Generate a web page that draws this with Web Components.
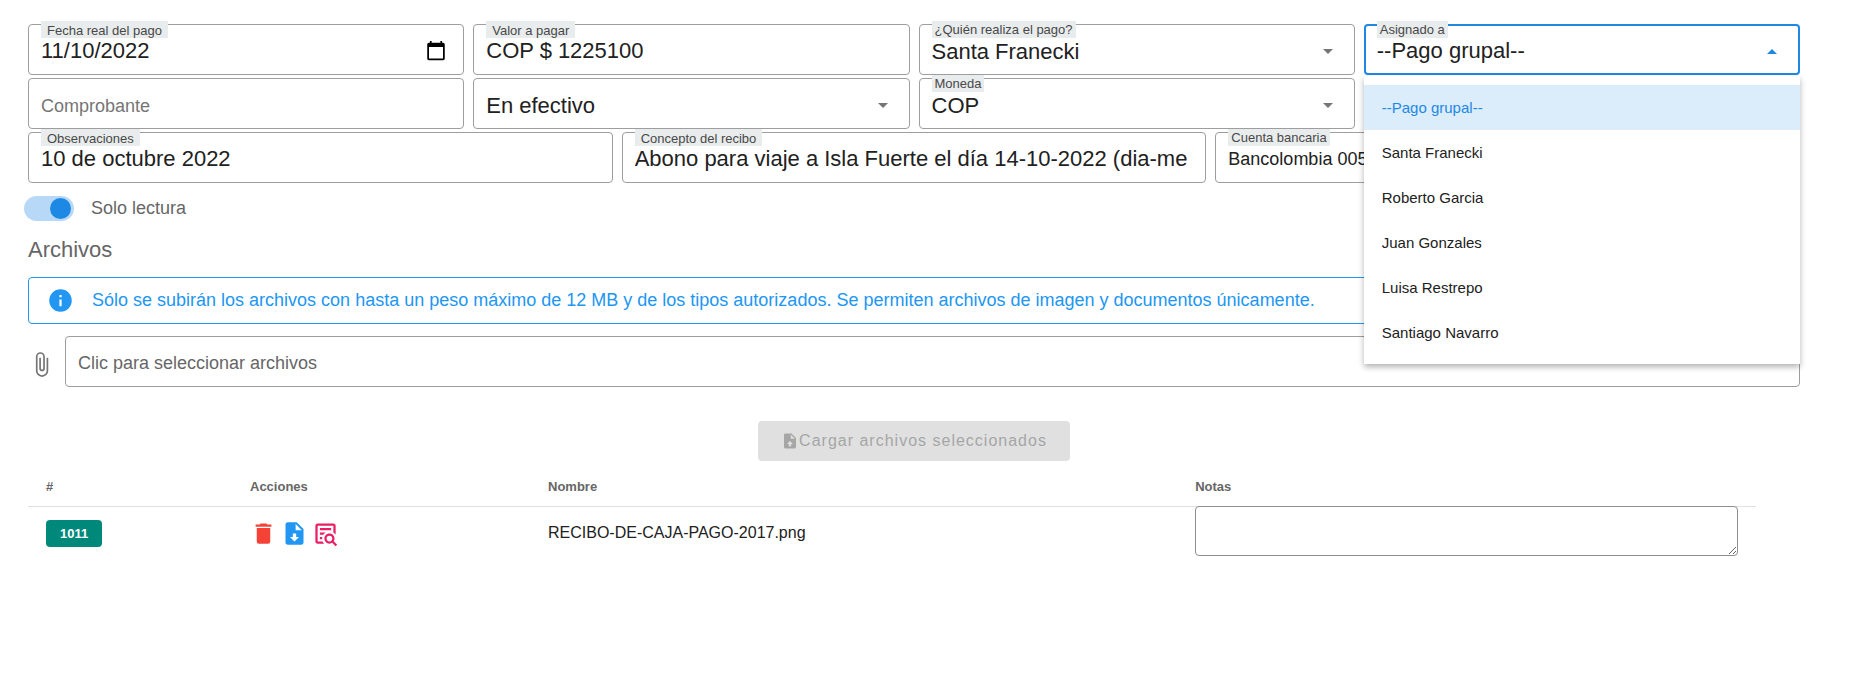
<!DOCTYPE html>
<html lang="es">
<head>
<meta charset="utf-8">
<title>Recibo de pago</title>
<style>
    body {
        margin: 0;
        background: #fff;
        color: #212121;
        font-family: "Liberation Sans", Arial, sans-serif;
        font-size: 18px;
    }
</style>
</head>
<body>
<payment-page></payment-page>

<script>
const ICONS = {
    'delete': 'M19,4H15.5L14.5,3H9.5L8.5,4H5V6H19M6,19A2,2 0 0,0 8,21H16A2,2 0 0,0 18,19V7H6V19Z',
    'file-download': 'M14,2H6C4.89,2 4,2.89 4,4V20C4,21.11 4.89,22 6,22H18C19.11,22 20,21.11 20,20V8L14,2M12,19L8,15H10.5V12H13.5V15H16L12,19M13,9V3.5L18.5,9H13Z',
    'file-upload': 'M14,2H6C4.89,2 4,2.89 4,4V20C4,21.11 4.89,22 6,22H18C19.11,22 20,21.11 20,20V8L14,2M13.5,16V19H10.5V16H8L12,12L16,16H13.5M13,9V3.5L18.5,9H13Z',
    'text-search': 'M15.5,12C18,12 20,14 20,16.5C20,17.38 19.75,18.21 19.31,18.9L22.39,22L21,23.39L17.88,20.32C17.19,20.75 16.37,21 15.5,21C13,21 11,19 11,16.5C11,14 13,12 15.5,12M15.5,14A2.5,2.5 0 0,0 13,16.5A2.5,2.5 0 0,0 15.5,19A2.5,2.5 0 0,0 18,16.5A2.5,2.5 0 0,0 15.5,14M5,3H19C20.11,3 21,3.89 21,5V13.03C20.5,12.23 19.81,11.54 19,11V5H5V19H9.5C9.81,19.75 10.26,20.42 10.81,21H5C3.89,21 3,20.11 3,19V5C3,3.89 3.89,3 5,3M7,7H17V9H7V7M7,11H12.03C11.23,11.5 10.54,12.19 10,13H7V11M7,15H9.17C9.06,15.5 9,16 9,16.5V17H7V15Z',
    'paperclip': 'M16.5,6V17.5A4,4 0 0,1 12.5,21.5A4,4 0 0,1 8.5,17.5V5A2.5,2.5 0 0,1 11,2.5A2.5,2.5 0 0,1 13.5,5V15.5A1,1 0 0,1 12.5,16.5A1,1 0 0,1 11.5,15.5V6H10V15.5A2.5,2.5 0 0,0 12.5,18A2.5,2.5 0 0,0 15,15.5V5A4,4 0 0,0 11,1A4,4 0 0,0 7,5V17.5A5.5,5.5 0 0,0 12.5,23A5.5,5.5 0 0,0 18,17.5V6H16.5Z',
    'information': 'M13,9H11V7H13M13,17H11V11H13M12,2A10,10 0 0,0 2,12A10,10 0 0,0 12,22A10,10 0 0,0 22,12A10,10 0 0,0 12,2Z',
    'menu-down': 'M7,10L12,15L17,10H7Z',
    'menu-up': 'M7,15L12,10L17,15H7Z'
};

class MdIcon extends HTMLElement {
    connectedCallback() {
        if (this.shadowRoot) return;
        this.attachShadow({ mode: 'open' }).innerHTML = `
            <style>
                :host { display: inline-flex; flex: none; width: var(--icon-size, 27px); height: var(--icon-size, 27px); }
                svg { width: 100%; height: 100%; fill: currentColor; }
            </style>
            <svg viewBox="0 0 24 24" aria-hidden="true"><path d="${ICONS[this.getAttribute('name')]}"/></svg>
        `;
    }
}

// Outline and floating label shared by all the fields
const fieldStyles = `
    :host {
        display: block;
        position: relative;
        min-width: 0;
    }
    * { box-sizing: border-box; }
    .field {
        display: flex;
        align-items: center;
        height: 51px;
        padding: 3px 12px 0;
        border: 1px solid #9e9e9e;
        border-radius: 4px;
    }
    .label {
        position: absolute;
        top: -3px;
        left: 13px;
        padding: 2px 6px 0;
        background: #e8ecec;
        color: #484848;
        font-size: 13px;
        line-height: 15px;
        white-space: nowrap;
    }
    input, select {
        flex: 1;
        min-width: 0;
        height: 40px;
        padding: 0;
        border: 0;
        outline: 0;
        background: none;
        color: #212121;
        font-family: inherit;
        font-size: 22px;
    }
`;

class TextField extends HTMLElement {
    connectedCallback() {
        if (this.shadowRoot) return;
        const label = this.getAttribute('label') || '';
        const prefix = this.getAttribute('prefix');
        const placeholder = this.getAttribute('placeholder') || '';
        this.attachShadow({ mode: 'open' }).innerHTML = `
            <style>
                ${fieldStyles}
                .prefix { padding-right: 6px; font-size: 22px; white-space: nowrap; }
                input::placeholder { color: #757575; font-size: 18px; opacity: 1; }
                input::-webkit-calendar-picker-indicator { margin-right: 2px; }
                input::-webkit-datetime-edit-day-field,
                input::-webkit-datetime-edit-month-field,
                input::-webkit-datetime-edit-year-field { padding: 0; }
            </style>
            <div class="field">
                ${prefix ? `<span class="prefix">${prefix}</span>` : ''}
                <input id="input" type="${this.getAttribute('type') || 'text'}" placeholder="${placeholder}"
                    value="${this.getAttribute('value') || ''}" ${label ? '' : `aria-label="${placeholder}"`}>
            </div>
            ${label ? `<label class="label" for="input">${label}</label>` : ''}
        `;
    }
}

class SelectField extends HTMLElement {
    connectedCallback() {
        if (this.shadowRoot) return;
        const label = this.getAttribute('label') || '';
        const open = this.hasAttribute('open');
        this.attachShadow({ mode: 'open' }).innerHTML = `
            <style>
                ${fieldStyles}
                .field { padding-right: 14px; }
                .label { padding: 0 3px; line-height: 17px; }
                select { appearance: none; }
                md-icon { --icon-size: 24px; color: #757575; pointer-events: none; }
                :host([dense]) select { font-size: 18px; }
                :host([open]) .field { border: 2px solid #1e88e5; padding: 2px 14px 0 11px; }
                :host([open]) md-icon { color: #1e88e5; }
            </style>
            <div class="field">
                <select id="select" ${label ? '' : 'aria-label="Forma de pago"'}>
                    <option>${this.getAttribute('value')}</option>
                </select>
                <md-icon name="${open ? 'menu-up' : 'menu-down'}"></md-icon>
            </div>
            ${label ? `<label class="label" for="select">${label}</label>` : ''}
            <slot></slot>
        `;
    }
}

class OptionMenu extends HTMLElement {
    constructor() {
        super();
        this.attachShadow({ mode: 'open' }).innerHTML = `
            <style>
                :host {
                    display: block;
                    position: absolute;
                    z-index: 5;
                    top: 52px;
                    left: 0;
                    right: 0;
                    padding: 9px 0;
                    background: #fff;
                    box-shadow: 0 3px 6px rgba(0, 0, 0, .3);
                }
                ::slotted(button) {
                    display: block;
                    width: 100%;
                    height: 45px;
                    padding: 0 18px;
                    border: 0;
                    background: none;
                    color: #212121;
                    font-family: inherit;
                    font-size: 15px;
                    text-align: left;
                }
                ::slotted(button[aria-selected=true]) {
                    background: #dbecfb;
                    color: #1e88e5;
                }
            </style>
            <slot></slot>
        `;
    }

    connectedCallback() {
        this.setAttribute('role', 'listbox');
    }
}

class SwitchToggle extends HTMLElement {
    constructor() {
        super();
        this.attachShadow({ mode: 'open' }).innerHTML = `
            <style>
                :host { display: flex; }
                label { display: flex; align-items: center; gap: 17px; color: #666; line-height: 25px; }
                input {
                    appearance: none;
                    display: flex;
                    justify-content: flex-end;
                    align-items: center;
                    width: 50px;
                    height: 25px;
                    margin: 0;
                    padding: 0 3px;
                    border-radius: 13px;
                    background: #b7d9f7;
                }
                input::before {
                    content: "";
                    width: 21px;
                    height: 21px;
                    border-radius: 50%;
                    background: #1e88e5;
                }
                input:not(:checked) { justify-content: flex-start; background: #ccc; }
            </style>
            <label><input type="checkbox" role="switch" checked><slot></slot></label>
        `;
    }
}

class InfoAlert extends HTMLElement {
    constructor() {
        super();
        this.attachShadow({ mode: 'open' }).innerHTML = `
            <style>
                :host {
                    display: flex;
                    align-items: center;
                    gap: 18px;
                    padding: 9px 18px;
                    border: 1px solid #2196f3;
                    border-radius: 4px;
                    color: #2196f3;
                    line-height: 27px;
                }
            </style>
            <md-icon name="information"></md-icon>
            <div><slot></slot></div>
        `;
    }
}

class FileField extends HTMLElement {
    constructor() {
        super();
        this.attachShadow({ mode: 'open' }).innerHTML = `
            <style>
                ${fieldStyles}
                :host { display: flex; align-items: center; gap: 10px; color: #666; }
                md-icon { margin-top: 6px; color: #757575; }
                .field { flex: 1; }
                input { position: absolute; width: 1px; opacity: 0; }
            </style>
            <md-icon name="paperclip"></md-icon>
            <label class="field"><input type="file" multiple><slot></slot></label>
        `;
    }
}

class FilesTable extends HTMLElement {
    constructor() {
        super();
        this.attachShadow({ mode: 'open' }).innerHTML = `
            <style>
                :host { display: block; padding-right: 44px; }
                table { width: 100%; border-collapse: separate; border-spacing: 0; table-layout: fixed; }
                th {
                    box-sizing: border-box;
                    height: 38px;
                    padding: 0 18px 2px;
                    border-bottom: 1px solid #e0e0e0;
                    color: #666;
                    font-size: 13px;
                    text-align: left;
                }
                td { height: 52px; padding: 0 18px; font-size: 16px; }
                .id { width: 204px; }
                .actions { width: 298px; }
                .notes { width: 33.5%; }
                .badge {
                    display: inline-block;
                    padding: 0 14px;
                    border-radius: 4px;
                    background: #00897b;
                    color: #fff;
                    font-size: 13px;
                    font-weight: bold;
                    line-height: 27px;
                }
                .buttons { display: flex; gap: 4px; }
                button { display: flex; padding: 0; border: 0; background: none; }
                .red { color: #f44336; }
                .blue { color: #2196f3; }
                .pink { color: #e91e63; }
                .area { vertical-align: top; }
                textarea {
                    display: block;
                    box-sizing: border-box;
                    width: 100%;
                    height: 50px;
                    margin-top: -1px;
                    border: 1px solid #8e8e8e;
                    border-radius: 4px;
                    background: #fff;
                    font: inherit;
                }
            </style>
            <table>
                <thead>
                    <tr><th class="id">#</th><th class="actions">Acciones</th><th>Nombre</th><th class="notes">Notas</th></tr>
                </thead>
                <tbody>
                    <tr>
                        <td><span class="badge">1011</span></td>
                        <td>
                            <div class="buttons">
                                <button class="red" aria-label="Eliminar"><md-icon name="delete"></md-icon></button>
                                <button class="blue" aria-label="Descargar"><md-icon name="file-download"></md-icon></button>
                                <button class="pink" aria-label="Ver"><md-icon name="text-search"></md-icon></button>
                            </div>
                        </td>
                        <td>RECIBO-DE-CAJA-PAGO-2017.png</td>
                        <td class="area"><textarea aria-label="Notas"></textarea></td>
                    </tr>
                </tbody>
            </table>
        `;
    }
}

class PaymentPage extends HTMLElement {
    constructor() {
        super();
        this.attachShadow({ mode: 'open' }).innerHTML = `
            <style>
                :host { display: block; padding: 24px 53px 24px 24px; }
                form, section { padding-left: 4px; }
                form { display: flex; flex-direction: column; gap: 3px; margin-bottom: 13px; }
                .row { display: grid; grid-template-columns: repeat(4, 1fr); gap: 9px; }
                .row.thirds { grid-template-columns: repeat(3, 1fr); }
                h2 { margin: 13px 0 11px; color: #666; font-size: 22px; font-weight: normal; line-height: 32px; }
                info-alert { margin-bottom: 12px; }
                .upload {
                    --icon-size: 18px;
                    display: flex;
                    align-items: center;
                    height: 40px;
                    margin: 34px auto 8px;
                    padding: 0 23px;
                    border: 0;
                    border-radius: 4px;
                    background: #e0e0e0;
                    color: #a6a6a6;
                    font-family: inherit;
                    font-size: 16px;
                    letter-spacing: 1px;
                }
            </style>
            <form>
                <div class="row">
                    <text-field type="date" label="Fecha real del pago" value="2022-11-10"></text-field>
                    <text-field label="Valor a pagar" prefix="COP $" value="1225100"></text-field>
                    <select-field label="¿Quién realiza el pago?" value="Santa Franecki"></select-field>
                    <select-field label="Asignado a" value="--Pago grupal--" open>
                        <option-menu>
                            <button type="button" role="option" aria-selected="true">--Pago grupal--</button>
                            <button type="button" role="option">Santa Franecki</button>
                            <button type="button" role="option">Roberto Garcia</button>
                            <button type="button" role="option">Juan Gonzales</button>
                            <button type="button" role="option">Luisa Restrepo</button>
                            <button type="button" role="option">Santiago Navarro</button>
                        </option-menu>
                    </select-field>
                </div>
                <div class="row">
                    <text-field placeholder="Comprobante"></text-field>
                    <select-field value="En efectivo"></select-field>
                    <select-field label="Moneda" value="COP"></select-field>
                </div>
                <div class="row thirds">
                    <text-field label="Observaciones" value="10 de octubre 2022"></text-field>
                    <text-field label="Concepto del recibo" value="Abono para viaje a Isla Fuerte el día 14-10-2022 (dia-me"></text-field>
                    <select-field label="Cuenta bancaria" value="Bancolombia 005" dense></select-field>
                </div>
            </form>
            <switch-toggle>Solo lectura</switch-toggle>
            <section>
                <h2>Archivos</h2>
                <info-alert>Sólo se subirán los archivos con hasta un peso máximo de 12 MB y de los tipos autorizados. Se permiten archivos de imagen y documentos únicamente.</info-alert>
                <file-field>Clic para seleccionar archivos</file-field>
                <button class="upload" type="button" disabled><md-icon name="file-upload"></md-icon>Cargar archivos seleccionados</button>
                <files-table></files-table>
            </section>
        `;
    }
}

// Define the new elements
customElements.define('md-icon', MdIcon);
customElements.define('text-field', TextField);
customElements.define('select-field', SelectField);
customElements.define('option-menu', OptionMenu);
customElements.define('switch-toggle', SwitchToggle);
customElements.define('info-alert', InfoAlert);
customElements.define('file-field', FileField);
customElements.define('files-table', FilesTable);
customElements.define('payment-page', PaymentPage);
</script>
</body>
</html>
